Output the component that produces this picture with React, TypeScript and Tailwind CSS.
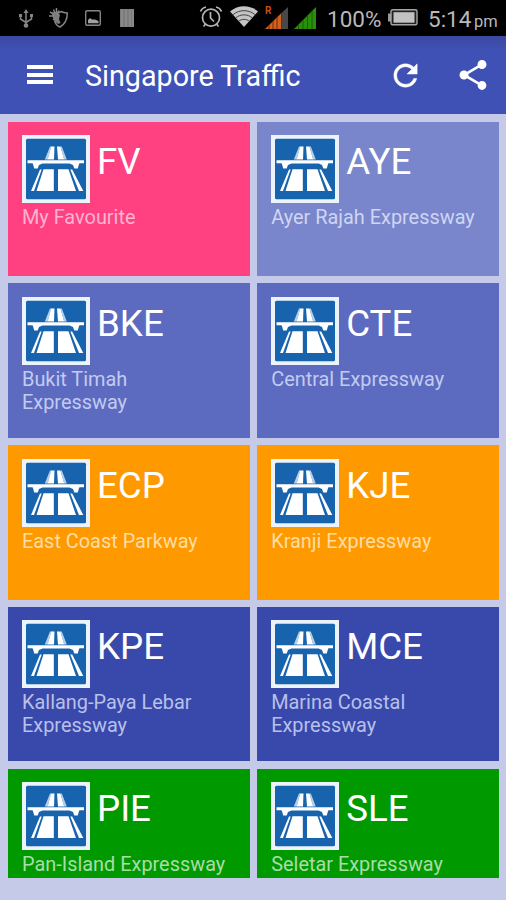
import React from 'react';

type Tile = { code: string; name: string; color: string };

const tiles: Tile[] = [
  { code: 'FV', name: 'My Favourite', color: 'bg-[#ff4081] text-[#ffb3d0]' },
  { code: 'AYE', name: 'Ayer Rajah Expressway', color: 'bg-[#7986cb] text-[#cfd5f3]' },
  { code: 'BKE', name: 'Bukit Timah Expressway', color: 'bg-[#5c6bc0] text-[#c3caf0]' },
  { code: 'CTE', name: 'Central Expressway', color: 'bg-[#5c6bc0] text-[#c3caf0]' },
  { code: 'ECP', name: 'East Coast Parkway', color: 'bg-[#ff9900] text-[#ffdda6]' },
  { code: 'KJE', name: 'Kranji Expressway', color: 'bg-[#ff9900] text-[#ffdda6]' },
  { code: 'KPE', name: 'Kallang-Paya Lebar Expressway', color: 'bg-[#3949ab] text-[#b8c0ea]' },
  { code: 'MCE', name: 'Marina Coastal Expressway', color: 'bg-[#3949ab] text-[#b8c0ea]' },
  { code: 'PIE', name: 'Pan-Island Expressway', color: 'bg-[#009900] text-[#a8dda8]' },
  { code: 'SLE', name: 'Seletar Expressway', color: 'bg-[#009900] text-[#a8dda8]' },
];

function RoadSign() {
  return (
    <svg className="h-[68px] w-[68px] shrink-0" viewBox="0 0 68 68">
      <rect width="68" height="68" fill="#edf3fb" />
      <rect x="4" y="3.700" width="60" height="60.600" rx="1.500" fill="#1763ae" />
      <g fill="#fff">
        <path d="M29 11.500h3.500L32 24.500h-6.500z" />
        <path d="M35 11.500h3.500l3.800 13H36z" />
        <path d="M28 11.500h1.300l-3.500 13H22.800zM38.500 11.500h1.300l5 13h-2.800z" fill="#b5cfea" />
        <path d="M5.500 25.300h56.500v3h-4.500l-.7 1.500-1 3.700h-3.500l-1.300-3.500-3.500-1.500H20.500L17 30l-1.300 3.500h-3.500l-1-3.700-.7-1.500h-5z" />
        <path d="M21.500 34.200h10.300V56H14.500z" />
        <path d="M36 34.200h10.500L54 56H36z" />
        <path d="M18 34.500h1.700L12 56H9z" />
        <path d="M48.300 34.500h1.900L61.300 56H57z" />
      </g>
    </svg>
  );
}

function UsbIcon() {
  return (
    <svg className="h-5 w-4" viewBox="0 0 16 20" fill="none" stroke="#858585" strokeWidth="1.500">
      <path d="M8 3v13M2.500 6.500V10L8 13.500 13.500 10V6.500" />
      <path d="M8 0l2.500 4h-5z" fill="#858585" stroke="none" />
      <circle cx="8" cy="16.500" r="2.300" fill="#858585" stroke="none" />
      <path d="M1 5h3v3H1zM12 5h3v3h-3z" fill="#858585" stroke="none" />
    </svg>
  );
}

function ShieldIcon() {
  return (
    <svg className="h-5 w-5" viewBox="0 0 20 20" fill="none" stroke="#858585" strokeWidth="1.500">
      <path d="M9 5l3-1.500c2 1 4 1.300 6.300 1.500 0 7-2 11-7.300 14-2.500-1-4.500-3-5.500-6" />
      <path d="M2.500 5L8 3.500l3 3.500-1 4 1.500 4-2 1-3.500-2-2-4z" fill="#7c7c7c" stroke="none" />
      <path d="M4.500 1.500l1.500 4M7.500 0v5M1 4l4 2M0 8h5M10 2.500L8 7M4 12l3-2" />
    </svg>
  );
}

function PictureIcon() {
  return (
    <svg className="h-4 w-4" viewBox="0 0 16 16" fill="none" stroke="#858585" strokeWidth="1.400">
      <rect x=".7" y=".7" width="14.600" height="14.600" rx="1.300" />
      <path d="M3 13.300V10l2-2 2 1.500h3l3.500 1.500v2.300z" fill="#a0a0a0" stroke="none" />
    </svg>
  );
}

function BarsIcon() {
  return (
    <svg className="h-[18px] w-[14px]" viewBox="0 0 14 18">
      <path fill="#7b7b7b" d="M0 0h14v18H0z" />
      <path stroke="#989898" d="M2 0v18M6 0v18M10 0v18M13 0v18" />
    </svg>
  );
}

function AlarmIcon() {
  return (
    <svg className="h-[22px] w-6" viewBox="0 0 24 22" fill="none" stroke="#b5b5b5" strokeWidth="1.700">
      <circle cx="12" cy="11.700" r="8.500" />
      <path d="M11.500 6v6l3.500 3.500M1.500 5.500C2.500 3 4.500 1.500 7 1M22.500 5.500C21.500 3 19.500 1.500 17 1M6.500 18l-2 2.500M17.500 18l2 2.500" />
    </svg>
  );
}

function WifiIcon() {
  return (
    <svg className="h-[21px] w-7" viewBox="0 0 28 21">
      <path fill="#c4c4c4" d="M0 5.500C8-1.500 20-1.500 28 5.500L14 21z" />
      <path fill="none" stroke="#333" strokeWidth=".9" d="M2.800 8.800c6.500-5.500 16-5.500 22.400 0M5.500 12c5-4.200 12-4.200 17 0M8.500 15.300c3.200-2.600 7.800-2.600 11 0" />
    </svg>
  );
}

function SignalOne() {
  return (
    <svg className="h-[23px] w-[23px] overflow-visible" viewBox="0 0 23 23">
      <path fill="#484848" d="M17 6.500L23 1v22h-6z" />
      <path fill="#d4601b" d="M0 23L17 6.500V23z" />
      <path stroke="#4b210b" strokeWidth=".8" d="M4 19v4M8 15v8M12 11v12M16.500 7v16" />
      <text x="0" y="8" fontSize="10" fontWeight="bold" fontFamily="Roboto, sans-serif" fill="#c94f10">R</text>
    </svg>
  );
}

function SignalTwo() {
  return (
    <svg className="h-[22px] w-[22px]" viewBox="0 0 22 22">
      <path fill="#29900b" d="M0 22L22 0v22z" />
      <path stroke="#155405" strokeWidth=".8" d="M4.500 17.500V22M9 13v9M13.500 8.500V22M18 4v18" />
    </svg>
  );
}

function BatteryIcon() {
  return (
    <svg className="h-[17px] w-[30px]" viewBox="0 0 30 17">
      <path fill="#999" d="M0 4.500h3v8H0z" />
      <rect x="3" y=".8" width="26" height="15" rx="1.500" fill="#222" stroke="#a5a5a5" strokeWidth="1.400" />
      <rect x="5.500" y="3.200" width="21" height="10.500" fill="#c2c2c2" />
    </svg>
  );
}

function StatusBar() {
  return (
    <div className="flex h-9 items-start bg-black pl-[18px] text-[#b9b9b9]">
      <div className="flex pt-[9px]">
        <UsbIcon />
        <div className="-mt-px ml-[15px]"><ShieldIcon /></div>
        <div className="mt-px ml-[16px]"><PictureIcon /></div>
        <div className="ml-[19px]"><BarsIcon /></div>
      </div>
      <div className="ml-[65px] flex pt-[6px]">
        <AlarmIcon />
        <div className="ml-[7px]"><WifiIcon /></div>
        <div className="ml-[7px]"><SignalOne /></div>
        <div className="mt-px ml-[6px]"><SignalTwo /></div>
      </div>
      <span className="ml-[11px] w-[53px] text-[22.500px] leading-[38px] whitespace-nowrap">100%</span>
      <div className="ml-[8px] pt-[9px]"><BatteryIcon /></div>
      <div className="ml-[10px] flex items-baseline leading-[38px] whitespace-nowrap">
        <span className="w-[43px] text-[22.500px]">5:14</span>
        <span className="ml-[3px] text-[16.500px]">pm</span>
      </div>
    </div>
  );
}

function AppBar() {
  return (
    <header className="flex h-[78px] items-center bg-[linear-gradient(#3a48a0,#3f51b5_14px)] pl-[27px] text-white">
      <div className="-mt-px flex w-[26px] flex-col gap-[3.500px]">
        <div className="h-[4px] bg-white" />
        <div className="h-[4px] bg-white" />
        <div className="h-[4px] bg-white" />
      </div>
      <h1 className="ml-[32px] w-[300px] pt-[2px] text-[28.700px] leading-none whitespace-nowrap">Singapore Traffic</h1>
      <svg className="ml-[3px] h-[35px] w-[35px] shrink-0" viewBox="0 0 24 24" fill="#fff" stroke="#fff" strokeWidth=".3">
        <path d="M17.650 6.350C16.200 4.900 14.210 4 12 4c-4.420 0-7.990 3.580-7.990 8s3.570 8 7.990 8c3.730 0 6.840-2.550 7.730-6h-2.080c-.82 2.330-3.040 4-5.650 4-3.310 0-6-2.690-6-6s2.690-6 6-6c1.660 0 3.140.690 4.220 1.780L13 11h7V4l-2.350 2.350z" />
      </svg>
      <svg className="ml-[32px] h-9 w-9 shrink-0" viewBox="0 0 24 24" fill="#fff">
        <path d="M18 16.080c-.76 0-1.440.3-1.960.77L8.910 12.700c.05-.23.09-.46.09-.7s-.04-.47-.09-.7l7.050-4.110c.54.5 1.250.81 2.040.81 1.660 0 3-1.340 3-3s-1.340-3-3-3-3 1.340-3 3c0 .24.04.47.09.7L8.040 9.810C7.500 9.310 6.790 9 6 9c-1.660 0-3 1.340-3 3s1.340 3 3 3c.79 0 1.500-.31 2.040-.81l7.120 4.160c-.05.21-.08.43-.08.65 0 1.610 1.310 2.920 2.920 2.920 1.610 0 2.920-1.310 2.920-2.920s-1.310-2.920-2.920-2.920z" />
      </svg>
    </header>
  );
}

function TileCard({ tile }: { tile: Tile }) {
  return (
    <div className={`overflow-hidden px-[14.500px] pt-[13.500px] ${tile.color}`}>
      <div className="flex gap-[7px]">
        <RoadSign />
        <span className="pt-[6px] text-[36.700px] leading-[42px] text-white">{tile.code}</span>
      </div>
      <p className="mt-[3px] text-[19.900px] leading-[23px]">{tile.name}</p>
    </div>
  );
}

export default function App() {
  return (
    <div className="flex h-[900px] w-[506px] flex-col overflow-hidden bg-[#c5cae9] font-['Roboto',sans-serif]">
      <StatusBar />
      <AppBar />
      <main className="grid grid-cols-[242.500px_242.500px] grid-rows-[154.500px_154.500px_154.500px_154.500px_109px] gap-x-[6.700px] gap-y-[7.200px] pt-[7.800px] pl-[7.500px]">
        {tiles.map((tile) => (
          <TileCard key={tile.code} tile={tile} />
        ))}
      </main>
    </div>
  );
}
